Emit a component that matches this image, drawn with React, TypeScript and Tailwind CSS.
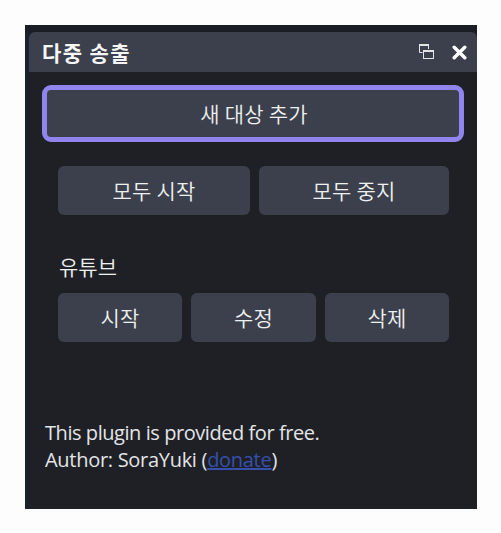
const korean = "font-['Noto_Sans_CJK_KR',sans-serif]";

function PanelButton({ label, width }: { label: string; width: string }) {
  return (
    <button
      className={`${width} ${korean} h-[49px] rounded-md bg-[#3c404d] pb-px text-[21px] font-[350] leading-none tracking-[0.2px] text-[#eef0f0] hover:bg-[#4a4f5e]`}
    >
      {label}
    </button>
  );
}

function FloatIcon() {
  return (
    <svg width="17" height="16" viewBox="0 0 17 16" fill="none" className="text-[#e4e4e6]">
      <path d="M4.5 8.5H1.5V1.5H10.5V5" stroke="currentColor" />
      <path d="M1 1H11" stroke="currentColor" strokeWidth="2" />
      <rect x="5.5" y="6.5" width="10" height="8" stroke="currentColor" />
      <path d="M5 7H16" stroke="currentColor" strokeWidth="2" />
    </svg>
  );
}

function CloseIcon() {
  return (
    <svg width="15" height="15" viewBox="0 0 15 15" fill="none">
      <path d="M2.2 2.2L12.8 12.8M12.8 2.2L2.2 12.8" stroke="#fff" strokeWidth="3.4" strokeLinecap="round" />
    </svg>
  );
}

export default function App() {
  return (
    <main className="h-[533px] w-[501px] bg-[#fdfdfd] pl-[25px] pt-[25px]">
      <section className="h-[484px] w-[452px] border-l-4 border-[#1c222c] bg-[#1e2026]">
        <div className="-ml-1 h-[7px] bg-[#1b1e24]" />
        <header className="flex h-10 items-center rounded-t-md bg-[#3c404c] pl-[13px] pr-[10px]">
          <h1 className={`${korean} flex-1 text-[21px] font-bold leading-none tracking-[1.4px] text-[#f6f6f6]`}>다중 송출</h1>
          <button aria-label="분리" className="mr-[17px]">
            <FloatIcon />
          </button>
          <button aria-label="닫기">
            <CloseIcon />
          </button>
        </header>

        <div className="pl-[13px] pt-[13px]">
          <button
            className={`${korean} h-[57px] w-[422px] rounded-[9px] border-[5px] border-[#9184ee] bg-[#3c404c] pb-px pl-[2px] text-[21px] font-[350] leading-none tracking-[0.2px] text-[#eef0f0]`}
          >
            새 대상 추가
          </button>

          <div className="ml-4 mt-6 flex gap-[9px]">
            <PanelButton label="모두 시작" width="w-[192px]" />
            <PanelButton label="모두 중지" width="w-[190px]" />
          </div>

          <h2 className={`${korean} ml-[17px] mt-[38px] h-10 text-[21px] font-[350] leading-[26px] text-[#eef0f0]`}>
            유튜브
          </h2>
          <div className="ml-4 flex gap-[9px]">
            <PanelButton label="시작" width="w-[124px]" />
            <PanelButton label="수정" width="w-[125px]" />
            <PanelButton label="삭제" width="w-[124px]" />
          </div>

          <p className="ml-[3px] mt-[77px] font-['Open_Sans',sans-serif] text-[20px] leading-[27px] text-[#e4e5e6]">
            <span className="tracking-[-0.44px]">This plugin is provided for free.</span>
            <br />
            <span className="tracking-[-0.29px]">
              Author: SoraYuki (
              <a href="#" className="text-[#3450ac] underline">
                donate
              </a>
              )
            </span>
          </p>
        </div>
      </section>
    </main>
  );
}
